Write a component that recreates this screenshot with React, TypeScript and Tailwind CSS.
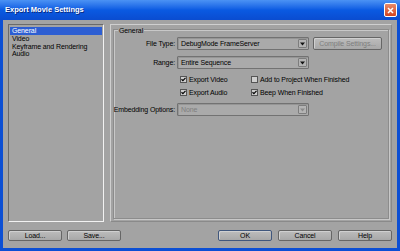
import React from 'react'

// small dropdown arrow box used inside the select fields
function Arrow({ disabled }: { disabled?: boolean }) {
  return (
    <span className="flex h-full w-[9px] items-center justify-center rounded-[1px] border border-[#7d7d7d] bg-[#b4b4b4]">
      <svg width="5" height="4" viewBox="0 0 5 4" aria-hidden>
        <path d="M0 0.5 L5 0.5 L2.5 3.5 Z" fill={disabled ? '#8a8a8a' : '#111'} />
      </svg>
    </span>
  )
}

function Select({ value, disabled }: { value: string; disabled?: boolean }) {
  return (
    <div className="flex h-[13px] w-[132px] items-center justify-between rounded-[1px] border border-[#727272] bg-[#aaaaaa] py-[1px] pl-[3px] pr-[1px] shadow-[inset_1px_1px_0_#959595]">
      <span className={disabled ? 'text-[#7e7e7e]' : 'text-black'}>{value}</span>
      <Arrow disabled={disabled} />
    </div>
  )
}

function Check({ checked, label }: { checked: boolean; label: string }) {
  return (
    <div className="flex items-center gap-[2px]">
      <span className="flex h-[7px] w-[7px] items-center justify-center border border-[#555] bg-[#cfcfcf]">
        {checked && (
          <svg width="6" height="5" viewBox="0 0 6 5" aria-hidden>
            <path d="M0.6 2.2 L2.3 3.9 L5.4 0.6" stroke="#000" strokeWidth="1.4" fill="none" />
          </svg>
        )}
      </span>
      <span className="whitespace-nowrap">{label}</span>
    </div>
  )
}

function Button({ label, primary, disabled, w = 'w-[54px]' }: { label: string; primary?: boolean; disabled?: boolean; w?: string }) {
  return (
    <button
      className={`flex h-full ${w} items-center justify-center rounded-[2px] border bg-gradient-to-b from-[#bdbdbd] to-[#a8a8a8] shadow-[inset_1px_1px_0_#d0d0d0] ${
        primary ? 'border-[#40577d]' : 'border-[#666]'
      } ${disabled ? 'text-[#7d7d7d]' : 'text-black'}`}
    >
      {label}
    </button>
  )
}

function Label({ text }: { text: string }) {
  return (
    <span className="flex w-[63px] shrink-0 justify-end whitespace-nowrap pr-[2px]">{text}</span>
  )
}

export default function App() {
  return (
    <div className="flex h-[251px] w-[400px] flex-col overflow-hidden bg-[#0c4fd4] font-['Liberation_Sans',Arial,sans-serif] text-[7px] leading-none tracking-[-0.12px] text-black">
      {/* title bar */}
      <div className="flex h-[20px] items-center justify-between bg-gradient-to-b from-[#4b92f4] via-[#0a5ae2] to-[#0a4cd0] pl-[5px] pr-[3px]">
        <span className="text-[7.5px] font-bold tracking-normal text-white [text-shadow:1px_1px_0_#0a2a80]">Export Movie Settings</span>
        <span className="flex h-[14px] w-[13px] items-center justify-center rounded-[2px] border border-white bg-gradient-to-b from-[#e88a6a] to-[#d2421c]">
          <svg width="7" height="7" viewBox="0 0 7 7" aria-hidden>
            <path d="M1 1 L6 6 M6 1 L1 6" stroke="#fff" strokeWidth="1.5" />
          </svg>
        </span>
      </div>

      {/* dialog body */}
      <div className="mx-[3px] mb-[3px] flex flex-1 flex-col bg-[#a3a3a3] px-[5px] pb-[7px] pt-[4px]">
        <div className="flex h-[198px] gap-[6px]">
          {/* category list */}
          <div className="w-[96px] border border-b-[#f2f2f2] border-l-[#6a6a6a] border-r-[#f2f2f2] border-t-[#6a6a6a] bg-[#a3a3a3] px-[1px] pt-[2px]">
            <div className="flex h-[7.7px] items-center bg-[#2d5ed2] pl-[2px] text-white">General</div>
            <div className="flex h-[7.7px] items-center pl-[2px]">Video</div>
            <div className="flex h-[7.7px] items-center pl-[2px]">Keyframe and Rendering</div>
            <div className="flex h-[7.7px] items-center pl-[2px]">Audio</div>
          </div>

          {/* settings panel */}
          <div className="flex-1 border border-[#cfcfcf] border-b-[#8a8a8a] border-r-[#8a8a8a] px-[2px] pb-[2px] pt-[4px]">
            <div className="relative h-full border border-[#8c8c8c] shadow-[1px_1px_0_#c8c8c8,inset_1px_1px_0_#c8c8c8]">
              <span className="absolute left-[4px] top-[-3px] bg-[#a3a3a3] px-[1px]">General</span>

              <div className="flex flex-col pt-[7px]">
                <div className="flex items-center">
                  <Label text="File Type:" />
                  <Select value="DebugMode FrameServer" />
                  <div className="ml-[4px] h-[13px]">
                    <Button label="Compile Settings..." disabled w="w-[69px]" />
                  </div>
                </div>

                <div className="mt-[6px] flex items-center">
                  <Label text="Range:" />
                  <Select value="Entire Sequence" />
                </div>

                <div className="mt-[7px] flex flex-col gap-[6px] pl-[66px]">
                  <div className="flex">
                    <div className="w-[71px]">
                      <Check checked label="Export Video" />
                    </div>
                    <Check checked={false} label="Add to Project When Finished" />
                  </div>
                  <div className="flex">
                    <div className="w-[71px]">
                      <Check checked label="Export Audio" />
                    </div>
                    <Check checked label="Beep When Finished" />
                  </div>
                </div>

                <div className="mt-[7px] flex items-center">
                  <Label text="Embedding Options:" />
                  <Select value="None" disabled />
                </div>
              </div>
            </div>
          </div>
        </div>

        {/* bottom buttons */}
        <div className="mt-[8px] flex h-[11px]">
          <div className="flex gap-[5px]">
            <Button label="Load..." />
            <Button label="Save..." />
          </div>
          <div className="ml-auto flex gap-[6px]">
            <Button label="OK" primary />
            <Button label="Cancel" />
            <Button label="Help" />
          </div>
        </div>
      </div>
    </div>
  )
}
